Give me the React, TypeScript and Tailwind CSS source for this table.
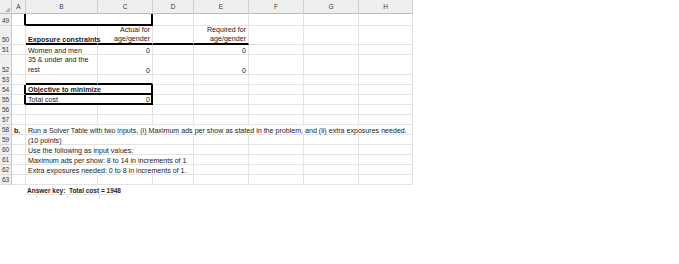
import React from "react";
import { twMerge } from "tailwind-merge";

// column track widths: row header, A..H
const COLS = "grid grid-rows-1 grid-cols-[12px_14px_72px_55px_41px_55px_55px_55px_54px]";

type CellDef = {
  span?: number;
  cls?: string;
  children?: React.ReactNode;
};

const spanCls: Record<number, string> = {
  1: "col-span-1",
  2: "col-span-2",
  3: "col-span-3",
  7: "col-span-7",
};

function Row({ num, h, cells }: { num: number; h: string; cells: CellDef[] }) {
  return (
    <div className={twMerge(COLS, h)}>
      <div className="flex min-h-0 items-end justify-center border-r border-b border-r-[#c9c9c9] border-b-[#dadada] bg-[#efefef] pb-[1px] text-[6.5px] leading-[6px] text-[#3a3a3a]">
        {num}
      </div>
      {cells.map((c, i) => (
        <div
          key={i}
          className={twMerge(
            "flex min-h-0 items-end whitespace-nowrap border-r border-b border-[#e3e3e3] px-[2px] pb-[0.5px] text-[7.1px] leading-[6px] text-[#1a1a1a]",
            spanCls[c.span ?? 1],
            c.cls
          )}
        >
          {c.children}
        </div>
      ))}
    </div>
  );
}

const blank = (n: number): CellDef[] => Array.from({ length: n }, () => ({}));

export default function App() {
  const heads = ["A", "B", "C", "D", "E", "F", "G", "H"];
  return (
    <div className="h-[264px] w-[679px] bg-white" style={{ fontFamily: '"Liberation Sans", Arial, sans-serif' }}>
      <div className="w-[413px]">
        {/* column headers */}
        <div className={twMerge(COLS, "h-[14px]")}>
          <div className="flex items-end justify-end border-r border-b border-r-[#c9c9c9] border-b-[#bdbdbd] bg-[#efefef] p-[1px]">
            <svg width="5" height="5" viewBox="0 0 5 5">
              <polygon points="5,0 5,5 0,5" fill="#b5b5b5" />
            </svg>
          </div>
          {heads.map((l) => (
            <div
              key={l}
              className="flex items-center justify-center border-r border-b border-r-[#cfcfcf] border-b-[#bdbdbd] bg-[#efefef] text-[6.5px] text-[#3a3a3a]"
            >
              {l}
            </div>
          ))}
        </div>

        <Row
          num={49}
          h="h-[12px]"
          cells={[
            { cls: "border-r-2 border-r-black" },
            { span: 2, cls: "border-r-2 border-b-2 border-r-black border-b-black" },
            ...blank(5),
          ]}
        />
        <Row
          num={50}
          h="h-[19px]"
          cells={[
            {},
            { cls: "border-b-2 border-b-black font-bold", children: "Exposure constraints" },
            {
              cls: "border-b-2 border-b-black justify-end text-right whitespace-normal",
              children: (
                <span className="-mb-[1.5px] leading-[9px]">
                  Actual for
                  <br />
                  age/gender
                </span>
              ),
            },
            { cls: "border-b-2 border-b-black" },
            {
              cls: "border-b-2 border-b-black justify-end text-right whitespace-normal",
              children: (
                <span className="-mb-[1.5px] leading-[9px]">
                  Required for
                  <br />
                  age/gender
                </span>
              ),
            },
            ...blank(3),
          ]}
        />
        <Row
          num={51}
          h="h-[10px]"
          cells={[
            {},
            { children: "Women and men" },
            { cls: "justify-end", children: "0" },
            {},
            { cls: "justify-end", children: "0" },
            ...blank(3),
          ]}
        />
        <Row
          num={52}
          h="h-[20px]"
          cells={[
            {},
            {
              children: (
                <span className="-mb-[1.5px] leading-[10px]">
                  35 &amp; under and the
                  <br />
                  rest
                </span>
              ),
            },
            { cls: "justify-end", children: "0" },
            {},
            { cls: "justify-end", children: "0" },
            ...blank(3),
          ]}
        />
        <Row num={53} h="h-[10px]" cells={[{}, { cls: "border-b-2 border-b-black" }, { cls: "border-b-2 border-b-black" }, ...blank(5)]} />
        <Row
          num={54}
          h="h-[10px]"
          cells={[
            { cls: "border-r-2 border-r-black" },
            { span: 2, cls: "border-r-2 border-b-2 border-r-black border-b-black font-bold", children: "Objective to minimize" },
            ...blank(5),
          ]}
        />
        <Row
          num={55}
          h="h-[10px]"
          cells={[
            { cls: "border-r-2 border-r-black" },
            {
              span: 2,
              cls: "justify-between border-r-2 border-b-2 border-r-black border-b-black pr-[1px]",
              children: (
                <>
                  <span>Total cost</span>
                  <span>0</span>
                </>
              ),
            },
            ...blank(5),
          ]}
        />
        <Row num={56} h="h-[10px]" cells={blank(8)} />
        <Row num={57} h="h-[10px]" cells={blank(8)} />
        <Row
          num={58}
          h="h-[10px]"
          cells={[
            { cls: "font-bold", children: "b." },
            {
              span: 7,
              children:
                "Run a Solver Table with two inputs, (i) Maximum ads per show as stated in the problem, and (ii) extra exposures needed.",
            },
          ]}
        />
        <Row num={59} h="h-[10px]" cells={[{}, { span: 3, children: "(10 points)" }, ...blank(4)]} />
        <Row num={60} h="h-[10px]" cells={[{}, { span: 3, children: "Use the following as input values:" }, ...blank(4)]} />
        <Row
          num={61}
          h="h-[10px]"
          cells={[{}, { span: 3, children: "Maximum ads per show: 8 to 14 in increments of 1" }, ...blank(4)]}
        />
        <Row
          num={62}
          h="h-[10px]"
          cells={[{}, { span: 3, children: "Extra exposures needed: 0 to 8 in increments of 1." }, ...blank(4)]}
        />
        <Row num={63} h="h-[10px]" cells={blank(8)} />
      </div>

      {/* pasted answer key */}
      <div className="ml-[26px] mt-[1px] w-[92px]">
        <div className="h-[9px] whitespace-nowrap border-b border-[#e6e6e6] pl-[1px] text-[6.5px] font-bold leading-[9px] text-[#1e1e1e]">
          Answer key:&nbsp; Total cost = 1948
        </div>
        <div className="grid h-[4px] grid-cols-[11px_31px_32px_18px]">
          <div className="border-r border-[#e6e6e6]" />
          <div className="border-r border-[#e6e6e6]" />
          <div className="border-r border-[#e6e6e6]" />
          <div />
        </div>
      </div>
    </div>
  );
}
